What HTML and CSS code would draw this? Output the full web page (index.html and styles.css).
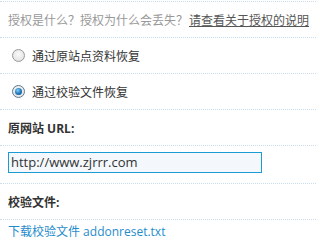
FILE: index.html
```html
<!DOCTYPE html>
<html>
<head>
<meta charset="utf-8">
<link rel="stylesheet" href="styles.css">
</head>
<body>
<div class="form">
  <div class="row first">
    <span class="tip">授权是什么？授权为什么会丢失？</span>
    <a class="doc" href="#">请查看关于授权的说明</a>
  </div>
  <div class="row radio-row">
    <span class="radio"></span>
    <span class="label">通过原站点资料恢复</span>
  </div>
  <div class="row radio-row">
    <span class="radio checked"></span>
    <span class="label">通过校验文件恢复</span>
  </div>
  <div class="row">
    <span class="title">原网站 URL:</span>
  </div>
  <div class="row input-row">
    <div class="input">http://www.zjrrr.com</div>
  </div>
  <div class="row">
    <span class="title">校验文件:</span>
  </div>
  <div class="row last">
    <a class="download" href="#">下载校验文件 addonreset.txt</a>
  </div>
</div>
</body>
</html>
```
FILE: styles.css
```css
html, body {
  margin: 0;
  padding: 0;
  background: #fff;
}
body {
  width: 316px;
  height: 241px;
  overflow: hidden;
  font-family: "Open Sans", "Noto Sans CJK SC", sans-serif;
  font-size: 12px;
  color: #333;
}
.form {
  padding-top: 1px;
}
.row {
  display: flex;
  align-items: center;
  height: 35px;
  padding-left: 8px;
  border-bottom: 1px dotted #c9dff0;
}
.row.first {
  border-top: 1px dotted #c9dff0;
}
.row.last {
  border-bottom: none;
  height: auto;
  align-items: flex-start;
  padding-top: 4px;
  line-height: 16px;
}
.tip {
  color: #999;
}
.doc {
  color: #555;
  text-decoration: underline;
  margin-left: 1px;
}
.radio-row {
  padding-left: 12px;
}
.radio {
  box-sizing: border-box;
  width: 13px;
  height: 13px;
  border-radius: 50%;
  border: 1px solid #9a9a9a;
  background: radial-gradient(circle at 50% 40%, #fafafa 0%, #dcdcdc 100%);
  margin-right: 7px;
  display: flex;
  align-items: center;
  justify-content: center;
}
.radio.checked {
  border-color: #5b7a94;
}
.radio.checked::after {
  content: "";
  width: 7px;
  height: 7px;
  border-radius: 50%;
  background: radial-gradient(circle at 40% 35%, #7fd0ff 0%, #1f74b8 55%, #0b3f73 100%);
}
.label {
  color: #333;
}
.title {
  font-weight: bold;
  color: #333;
}
.input-row {
  height: 37px;
  align-items: flex-start;
}
.input {
  box-sizing: border-box;
  width: 254px;
  height: 21px;
  margin-top: 6px;
  border: 1px solid #1a9bd3;
  background: #f4f8fd;
  font-size: 13px;
  line-height: 19px;
  padding-left: 2px;
  color: #333;
}
.download {
  color: #1f8ccc;
  text-decoration: none;
}
```
